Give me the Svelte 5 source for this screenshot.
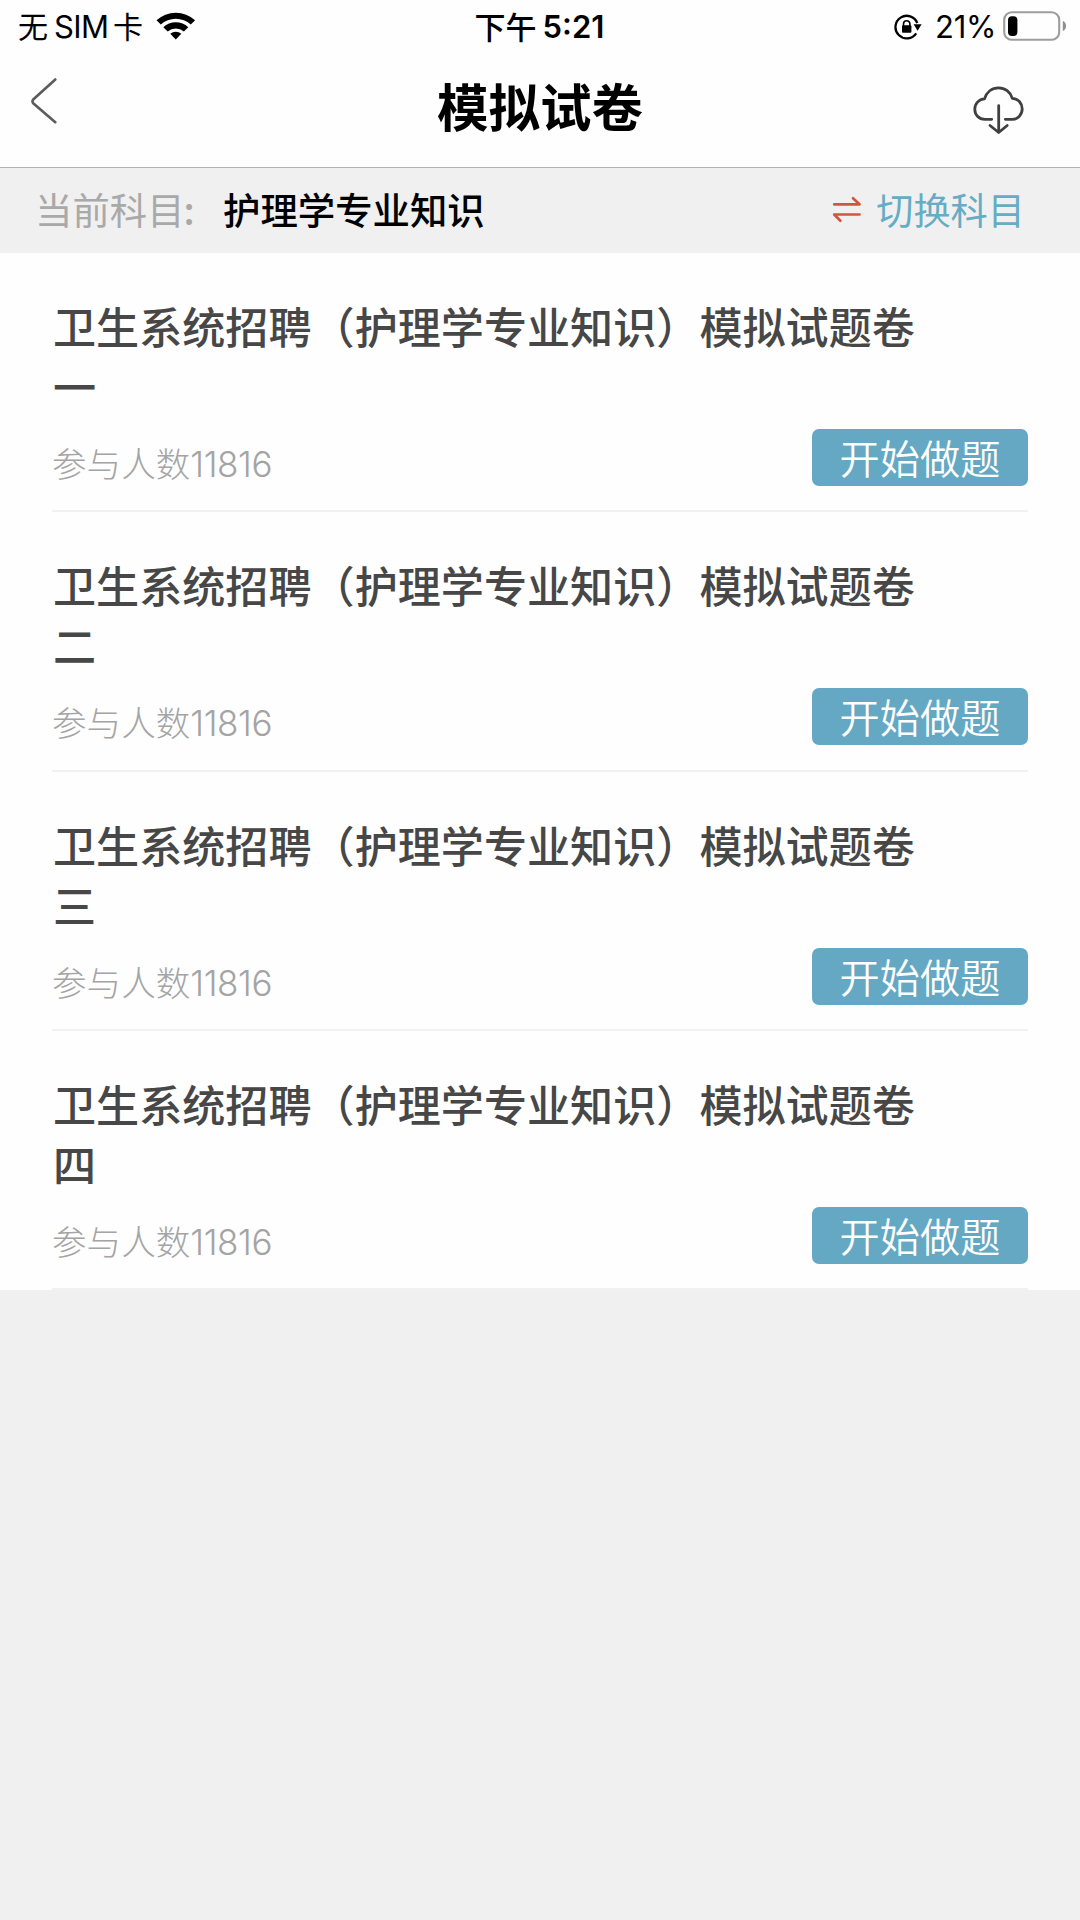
<script>
  const subject = '护理学专业知识';
  const papers = ['一', '二', '三', '四'].map((n) => ({
    title: `卫生系统招聘（${subject}）模拟试题卷${n}`,
    count: 11816
  }));
</script>

<div class="screen">
  <header>
    <div class="status">
      <div class="carrier">
        <span class="cjk">无</span><span class="sim">SIM</span><span class="cjk">卡</span>
        <svg class="wifi" width="40" height="30" viewBox="0 0 40 30">
          <path d="M0.5 9.3a28.2 28.2 0 0 1 38.6 0l-4.3 4.3a22 22 0 0 0-30 0z" />
          <path d="M7.3 16.2a18.3 18.3 0 0 1 25 0l-4.4 4.3a12.3 12.3 0 0 0-16.2 0z" />
          <path d="M14.3 22.8a8.6 8.6 0 0 1 11 0l-5.5 5.7z" />
        </svg>
      </div>
      <div class="clock"><span class="ampm">下午</span><span class="time">5:21</span></div>
      <div class="power">
        <svg class="lock" width="28" height="26" viewBox="0 0 28 26">
          <path d="M22.2 19.3A11.3 11.3 0 1 1 23.3 9" fill="none" stroke="#000" stroke-width="2.3" />
          <path d="M19.6 10.3h8l-4 6.4z" />
          <path d="M9.500 12V9.900a3.200 3.200 0 0 1 6.400 0V12" fill="none" stroke="#000" stroke-width="1.6" />
          <rect x="8" y="11.3" width="9.4" height="7.4" rx="1" />
        </svg>
        <span class="percent">21%</span>
        <svg class="battery" width="64" height="30" viewBox="0 0 64 30">
          <rect x="1.2" y="1.2" width="55" height="27.6" rx="7.5" fill="none" stroke="#9d9d9d" stroke-width="2.1" />
          <rect x="5" y="5.3" width="9.4" height="19.6" rx="4" />
          <path d="M59.8 9.8q3.2 1.6 3.2 5.2t-3.2 5.2z" fill="#8f8f8f" />
        </svg>
      </div>
    </div>
    <div class="nav">
      <svg class="back" width="28" height="48" viewBox="0 0 28 48">
        <path d="M25.3 2.5L3.5 22.2q-2 2.2 0 4.4L25.3 45.2" fill="none" stroke="#5c5c5c" stroke-width="2.6" stroke-linecap="round" />
      </svg>
      <h1>模拟试卷</h1>
      <svg class="cloud" width="52" height="50" viewBox="0 0 52 50" fill="none" stroke="#404041" stroke-width="2.8" stroke-linecap="round" stroke-linejoin="round">
        <path d="M18.7 34.3H12C5.5 34.3 1.8 29.5 1.8 24.2c0-5.5 4-9.9 9.7-10.3C13.5 7 19 2.8 25.5 2.8S37.5 7 39.3 13.3C45.5 13.7 49.2 18.5 49.2 23.8c0 6-4.2 10.5-10.2 10.5H32.3" />
        <path d="M25.7 20.7V47.5M17 40.5l8.7 7 8.5-7" />
      </svg>
    </div>
  </header>

  <section class="subject">
    <div class="label">当前科目<span class="colon">:</span></div>
    <div class="name">{subject}</div>
    <div class="switch">
      <svg width="30" height="28" viewBox="0 0 30 28" fill="none" stroke="#d25540" stroke-width="2.7" stroke-linecap="round" stroke-linejoin="round">
        <path d="M2.2 9.3H27.5L21 3.2M27.5 19.5H2.2l6.2 6.2" />
      </svg>
      <span>切换科目</span>
    </div>
  </section>

  <main>
    {#each papers as p}
      <article>
        <h2>{p.title}</h2>
        <div class="foot">
          <div class="count">参与人数<span>{p.count}</span></div>
          <button>开始做题</button>
        </div>
      </article>
    {/each}
  </main>
</div>

<style>
  :global(body) {
    background: #f0f0f0;
  }
  .screen {
    width: 1080px;
    height: 1920px;
    overflow: hidden;
    background: #f0f0f0;
    font-family: 'Noto Sans CJK SC', sans-serif;
    color: #000;
  }
  header {
    box-sizing: border-box;
    height: 168px;
    background: #fefefe;
    border-bottom: 1px solid #b2b2b2;
  }
  svg {
    display: block;
    flex: none;
  }
  .status {
    display: grid;
    grid-template-columns: 1fr auto 1fr;
    height: 54px;
    line-height: 54px;
    font-size: 30px;
  }
  .carrier,
  .clock,
  .power {
    display: flex;
    align-items: center;
    white-space: nowrap;
  }
  .carrier {
    padding-left: 18px;
  }
  .cjk {
    width: 30px;
    line-height: 51px;
    margin-top: -3px;
  }
  .sim {
    width: 65px;
    box-sizing: border-box;
    padding-left: 6px;
    font-family: Inter, sans-serif;
    font-size: 31px;
    letter-spacing: -0.6px;
  }
  .carrier .cjk + .wifi {
    margin: -3px 0 0 13px;
  }
  .ampm {
    margin-top: -3px;
    font-weight: 500;
    font-size: 31px;
  }
  .time {
    margin-left: 6px;
    font-family: Inter, sans-serif;
    font-weight: 600;
    font-size: 31px;
  }
  .clock {
    margin-left: -1px;
  }
  .power {
    justify-content: flex-end;
    padding-right: 13px;
  }
  .percent {
    width: 68px;
    margin-left: 13px;
    font-family: Inter, sans-serif;
    font-size: 31px;
    letter-spacing: -0.2px;
  }
  .lock {
    margin-left: -1px;
  }
  .battery {
    margin-top: -2px;
  }
  .nav {
    display: grid;
    grid-template-columns: 1fr auto 1fr;
    height: 113px;
  }
  .back {
    margin: 23px 0 0 30px;
  }
  h1 {
    margin: 0;
    font-size: 51.5px;
    font-weight: 700;
    line-height: 101px;
  }
  .cloud {
    justify-self: end;
    margin: 31px 55px 0 0;
  }
  .subject {
    display: flex;
    align-items: center;
    height: 85px;
    padding: 0 55px 0 35px;
    font-size: 37.4px;
    line-height: 82px;
  }
  .subject > div {
    height: 85px;
  }
  .label {
    width: 188px;
    color: #a9a9a9;
    font-weight: 400;
  }
  .colon {
    margin-left: -1px;
    font-weight: 500;
  }
  .name {
    font-weight: 500;
  }
  .switch {
    display: flex;
    align-items: flex-start;
    gap: 14px;
    margin-left: auto;
    color: #66acc4;
    font-size: 37.2px;
  }
  .switch svg {
    margin: 27px 0 0 -1px;
  }
  main {
    height: 1037px;
    display: grid;
    grid-template-rows: repeat(4, 1fr);
    padding: 0 52px;
    background: #fefefe;
  }
  article {
    box-sizing: border-box;
    border-bottom: 2px solid #f1f1f1;
    padding-top: 42px;
  }
  h2 {
    width: 870px;
    margin: 0;
    padding-left: 1px;
    color: #474747;
    font-size: 43.1px;
    font-weight: 500;
    line-height: 60px;
  }
  .foot {
    display: flex;
    justify-content: space-between;
    padding-top: 14px;
  }
  .count {
    color: #a4a4a4;
    font-size: 34.6px;
    font-weight: 300;
    line-height: 67px;
  }
  .count span {
    font-family: Inter, sans-serif;
    font-size: 35px;
    letter-spacing: -0.4px;
  }
  button {
    width: 216px;
    height: 57px;
    margin: 0;
    padding: 0 0 2px;
    border: 0;
    border-radius: 7px;
    background: #64a8c3;
    color: #fff;
    font: 350 40.2px/55px 'Noto Sans CJK SC', sans-serif;
  }
</style>
